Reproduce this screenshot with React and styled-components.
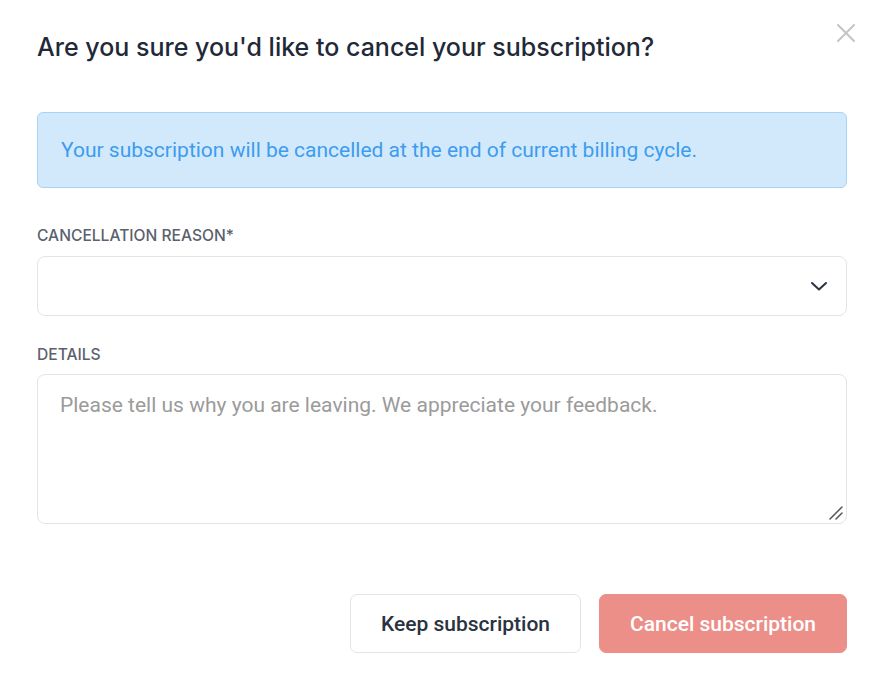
import React from "react";
import styled, { createGlobalStyle } from "styled-components";

const Global = createGlobalStyle`
  html, body { margin: 0; padding: 0; background: #fff; }
  body { font-family: Roboto, "Liberation Sans", sans-serif; }
  * { box-sizing: border-box; }
`;

const Dialog = styled.div`
  position: relative;
  width: 882px;
  height: 688px;
  padding: 29px 35px 0 37px;
  display: flex;
  flex-direction: column;
`;

const Title = styled.h2`
  margin: 0;
  font-family: Inter, Roboto, sans-serif;
  font-size: 25px;
  font-weight: 500;
  color: #1f2937;
  line-height: 36px;
`;

const Close = styled.button`
  position: absolute;
  top: 22px;
  right: 25px;
  width: 22px;
  height: 22px;
  padding: 0;
  border: none;
  background: none;
  cursor: pointer;
`;

const Alert = styled.div`
  margin-top: 47px;
  height: 76px;
  border: 1px solid #a8d3f6;
  background: #d2e9fc;
  border-radius: 6px;
  display: flex;
  align-items: center;
  padding: 0 23px;
  font-size: 21px;
  color: #3d9cef;
`;

const Label = styled.label`
  display: block;
  margin-top: ${(p) => p.$mt}px;
  font-family: Inter, Roboto, sans-serif;
  font-size: 15.6px;
  font-weight: 500;
  color: #5b616e;
  line-height: 22px;
`;

const Select = styled.div`
  margin-top: 9px;
  height: 60px;
  border: 1px solid #e3e3ea;
  border-radius: 8px;
  display: flex;
  align-items: center;
  justify-content: flex-end;
  padding-right: 18px;
`;

const TextArea = styled.div`
  position: relative;
  margin-top: 8px;
  height: 150px;
  border: 1px solid #e3e3ea;
  border-radius: 8px;
  padding: 18px 22px;
  font-size: 21px;
  line-height: 25px;
  color: #9b9b9b;
`;

const Grip = styled.svg`
  position: absolute;
  right: 2px;
  bottom: 2px;
`;

const Actions = styled.div`
  margin-top: 70px;
  display: flex;
  justify-content: flex-end;
  gap: 18px;
`;

const Button = styled.button`
  height: 59px;
  width: ${(p) => (p.$primary ? 248 : 231)}px;
  border-radius: 7px;
  font-family: Roboto, "Liberation Sans", sans-serif;
  font-size: 21px;
  font-weight: 500;
  border: 1px solid ${(p) => (p.$primary ? "#ec8f89" : "#e3e3ea")};
  background: ${(p) => (p.$primary ? "#ec8f89" : "#fff")};
  color: ${(p) => (p.$primary ? "#fff" : "#2b3240")};
  cursor: pointer;
`;

export default function App() {
  return (
    <>
      <Global />
      <Dialog>
        <Title>Are you sure you'd like to cancel your subscription?</Title>
        <Close aria-label="Close">
          <svg width="22" height="22" viewBox="0 0 22 22">
            <path d="M3 3 L19 19 M19 3 L3 19" stroke="#c4c4c8" strokeWidth="2" strokeLinecap="round" />
          </svg>
        </Close>
        <Alert>Your subscription will be cancelled at the end of current billing cycle.</Alert>
        <Label $mt={37}>CANCELLATION REASON*</Label>
        <Select>
          <svg width="18" height="12" viewBox="0 0 18 12">
            <path d="M2 3 L9 9.5 L16 3" fill="none" stroke="#2b3240" strokeWidth="2" strokeLinecap="round" strokeLinejoin="round" />
          </svg>
        </Select>
        <Label $mt={28}>DETAILS</Label>
        <TextArea>
          Please tell us why you are leaving. We appreciate your feedback.
          <Grip width="16" height="16" viewBox="0 0 16 16">
            <path d="M2 14 L14 2 M8 14 L14 8" stroke="#555" strokeWidth="1.5" strokeLinecap="round" />
          </Grip>
        </TextArea>
        <Actions>
          <Button>Keep subscription</Button>
          <Button $primary>Cancel subscription</Button>
        </Actions>
      </Dialog>
    </>
  );
}
